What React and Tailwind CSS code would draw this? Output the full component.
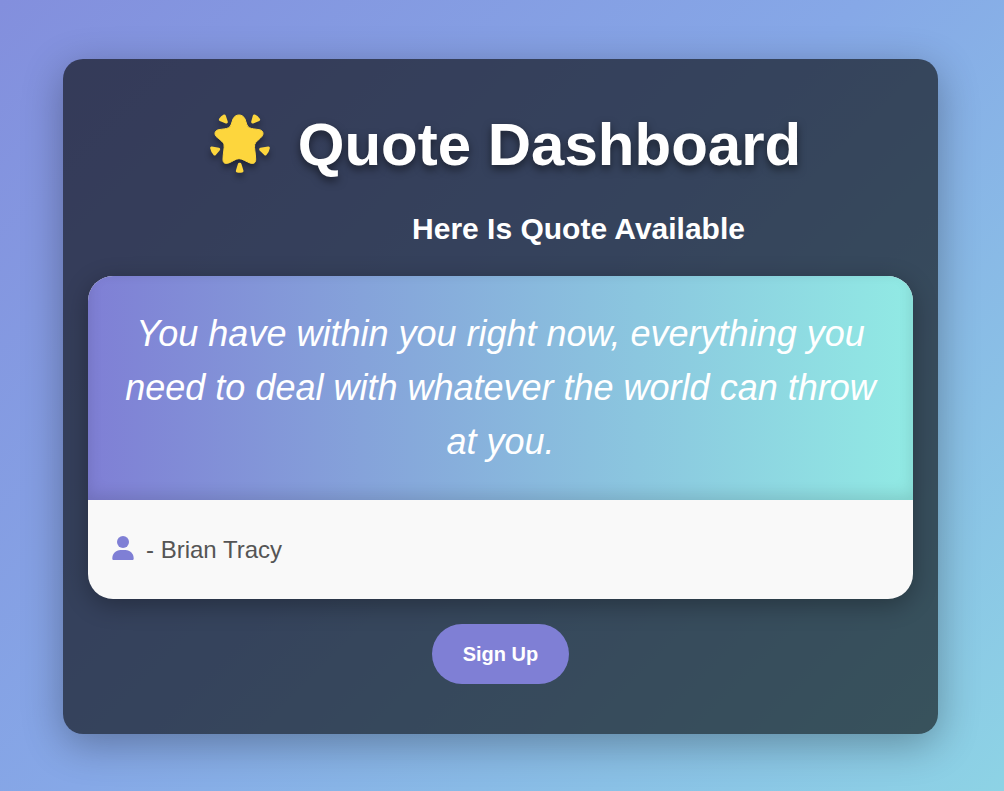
import React from "react";

function GlowingStar() {
  return (
    <svg
      viewBox="60 55 180 177"
      className="mx-3 mb-1 h-[59px] w-[60px] shrink-0 overflow-visible drop-shadow-[0_4px_3px_rgba(0,0,0,0.4)]"
      fill="#fdd63d"
      stroke="#fdd63d"
      strokeLinejoin="round"
      aria-hidden="true"
    >
      <path
        strokeWidth="3"
        d="M147 58 C155 58 161 62 165 70 C169 80 170 92 178 96 C185 100 197 100 207 102 C219 103 222 114 216 122 C209 131 196 138 194 147 C192 156 197 174 197 190 C198 202 190 206 180 202 C169 198 157 189 147 189 C137 189 127 198 116 202 C106 206 98 202 99 190 C99 174 104 156 102 147 C100 138 87 131 78 122 C72 114 75 103 87 102 C97 100 109 100 116 96 C124 92 125 80 129 70 C133 62 139 58 147 58 Z"
      />
      <g strokeWidth="9">
        <path d="M91 72 Q96 64 103 61 L109 79 Z" />
        <path d="M193 61 Q200 64 206 72 L188 79 Z" />
        <path d="M65 157 L86 161 L74 175 Q67 168 65 157 Z" />
        <path d="M235 157 L212 161 L226 175 Q233 168 235 157 Z" />
        <path d="M148 206 L142 226 Q149 227 156 226 L150 206 Z" />
      </g>
    </svg>
  );
}

function PersonIcon() {
  return (
    <svg viewBox="0 0 22 24" className="h-6 w-[22px] shrink-0 fill-[#7f7fd5]" aria-hidden="true">
      <circle cx="11" cy="6" r="6" />
      <path d="M8.6 14 H13.4 C18.2 14 21.7 17.6 21.7 22.4 C21.7 23.4 21.1 24 20.2 24 H1.8 C0.9 24 0.3 23.4 0.3 22.4 C0.3 17.6 3.8 14 8.6 14 Z" />
    </svg>
  );
}

function QuoteCard({ quote, author }) {
  return (
    <figure className="mt-[29px] overflow-hidden rounded-[25px] bg-[#f9f9f9] shadow-[0_6px_25px_rgba(0,0,0,0.3)]">
      <blockquote className="bg-[linear-gradient(to_right,#7f7fd5,#91eae4)] px-[31px] py-[31px] text-center text-4xl leading-[54px] text-white italic shadow-[inset_0_-5px_15px_rgba(0,0,0,0.12)]">
        {quote}
      </blockquote>
      <figcaption className="flex items-start gap-3 px-6 py-[30px] text-2xl leading-[39px] text-[#555]">
        <span className="pt-1.5">
          <PersonIcon />
        </span>
        <span>- {author}</span>
      </figcaption>
    </figure>
  );
}

export default function App() {
  return (
    <div className="min-h-screen bg-[linear-gradient(135deg,#838fdd_0%,#86a8e7_48%,#8dd3e5_100%)] pt-[59px] pr-[66px] pb-[57px] pl-[63px] font-['Liberation_Sans',Arial,sans-serif]">
      <main className="rounded-[20px] bg-black/60 px-[25px] py-[50px] shadow-[0_10px_40px_rgba(0,0,0,0.3)]">
        <h1 className="flex items-center justify-center gap-4 pr-0.5 text-6xl leading-[72px] font-bold text-white [text-shadow:0_4px_8px_rgba(0,0,0,0.5)]">
          <GlowingStar />
          <span>Quote Dashboard</span>
        </h1>
        <h2 className="mt-[30px] pl-[156px] text-center text-3xl leading-9 font-bold text-white">
          Here Is Quote Available
        </h2>
        <QuoteCard
          quote="You have within you right now, everything you need to deal with whatever the world can throw at you."
          author="Brian Tracy"
        />
        <div className="mt-[25px] flex justify-center">
          <button
            type="button"
            className="rounded-full bg-[#7f7fd5] px-[31px] py-4 text-xl leading-7 font-bold text-white"
          >
            Sign Up
          </button>
        </div>
      </main>
    </div>
  );
}
